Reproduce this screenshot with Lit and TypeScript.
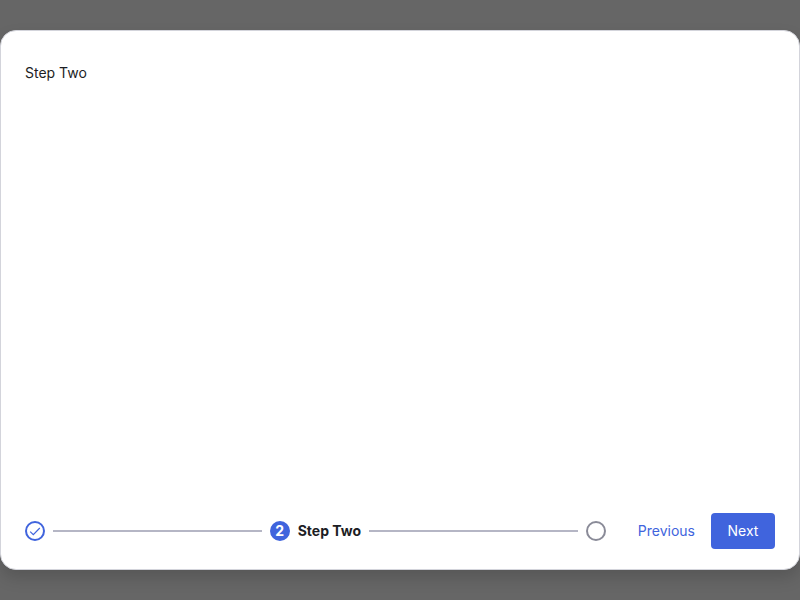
import { LitElement, html, css } from "lit";
import { customElement, state } from "lit/decorators.js";

@customElement("app-root")
export class AppRoot extends LitElement {
  static styles = css`
    :host {
      display: block;
      font-family: Inter, sans-serif;
      font-size: 14px;
      line-height: 20px;
      color: #1c1d24;
    }
    * {
      box-sizing: border-box;
    }
    .backdrop {
      min-height: 100vh;
      display: flex;
      flex-direction: column;
      padding: 30px 0;
      background: #666666;
    }
    .dialog {
      flex: 1;
      display: flex;
      flex-direction: column;
      background: #fff;
      border: 1px solid #d3d4db;
      border-radius: 16px;
      box-shadow: 0 8px 16px rgba(0, 0, 0, 0.15);
    }
    .content {
      flex: 1;
      padding: 32px 24px;
    }
    .content p {
      margin: 0;
    }
    .footer {
      display: flex;
      align-items: center;
      gap: 32px;
      padding: 20px 24px;
    }
    .steps {
      flex: 1;
      display: flex;
      align-items: center;
      gap: 8px;
      margin: 0;
      padding: 0;
      list-style: none;
    }
    .step {
      display: flex;
      align-items: center;
      gap: 8px;
    }
    .line {
      flex: 1;
      height: 2px;
      background: #b5b6c5;
    }
    .dot {
      display: flex;
      align-items: center;
      justify-content: center;
      width: 20px;
      height: 20px;
      border: 2px solid #8a8b98;
      border-radius: 50%;
    }
    .done {
      border-color: #4064dd;
      color: #4064dd;
    }
    .current {
      border-color: #4064dd;
      background: #4064dd;
      color: #fff;
      font-weight: 700;
    }
    .title {
      font-weight: 700;
    }
    .actions {
      display: flex;
      align-items: center;
      gap: 16px;
    }
    button {
      height: 36px;
      padding: 0;
      border: 0;
      border-radius: 4px;
      font: inherit;
      background: none;
      color: #4064dd;
      cursor: pointer;
    }
    .primary {
      min-width: 64px;
      padding: 0 16px;
      background: #4064dd;
      color: #fff;
    }
  `;

  @state() private label = "Step Two";

  render() {
    return html`
      <div class="backdrop">
        <section class="dialog" role="dialog" aria-label=${this.label}>
          <div class="content"><p>${this.label}</p></div>
          <footer class="footer">
            <ol class="steps">
              <li class="step">
                <span class="dot done">
                  <svg width="16" height="16" viewBox="0 0 16 16" fill="none" stroke="currentColor" stroke-width="1.2" aria-hidden="true">
                    <path d="M3.2 8.6l3.1 3 6.5-6.6" />
                  </svg>
                </span>
              </li>
              <li class="line" role="presentation"></li>
              <li class="step" aria-current="step">
                <span class="dot current">2</span>
                <span class="title">${this.label}</span>
              </li>
              <li class="line" role="presentation"></li>
              <li class="step"><span class="dot"></span></li>
            </ol>
            <div class="actions">
              <button type="button">Previous</button>
              <button type="button" class="primary">Next</button>
            </div>
          </footer>
        </section>
      </div>
    `;
  }
}
